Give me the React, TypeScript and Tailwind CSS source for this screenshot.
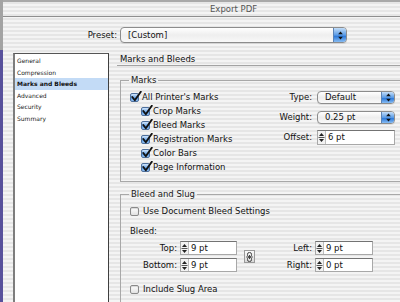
import React from "react";

function Check({ checked }: { checked: boolean }) {
  if (!checked) {
    return (
      <span className="relative inline-block w-[9px] h-[9px] shrink-0 rounded-[2px] border border-[#8a8a8a] bg-[linear-gradient(#ffffff,#e2e2e2)] shadow-[inset_0_1px_1px_rgba(0,0,0,0.15)]" />
    );
  }
  return (
    <span className="relative inline-block w-[9px] h-[9px] shrink-0 rounded-[2px] border border-[#4d6f9c] bg-[linear-gradient(#d3e6fb,#5c9de6_60%,#8fc0f3)]">
      <svg className="absolute left-[0px] top-[-3px]" width="11" height="11" viewBox="0 0 11 11">
        <path d="M1.3 6 L3.8 9.3 L9.8 0.8" fill="none" stroke="#111" strokeWidth="1.9" strokeLinecap="round" strokeLinejoin="round" />
      </svg>
    </span>
  );
}

function Arrows() {
  return (
    <svg width="5" height="9" viewBox="0 0 5 9">
      <path d="M2.5 0.5 L4.8 3.3 H0.2Z" fill="#111" />
      <path d="M2.5 8.5 L4.8 5.7 H0.2Z" fill="#111" />
    </svg>
  );
}

function Popup({ text, className }: { text: string; className: string }) {
  return (
    <div className={"flex rounded-[4px] border border-[#8c8c8c] overflow-hidden bg-[linear-gradient(#ffffff,#eeeeee_50%,#f8f8f8)] shadow-[0_1px_0_rgba(0,0,0,0.08)] " + className}>
      <div className="flex-1 pl-[7px] flex items-center text-[8.5px] leading-none text-[#111]">{text}</div>
      <div className="w-[13px] flex items-center justify-center border-l border-[#5b83b6] bg-[linear-gradient(#c3ddf8,#5a9be6_50%,#2f7ad9_60%,#88bdf3)]">
        <Arrows />
      </div>
    </div>
  );
}

function Stepper() {
  return (
    <div className="w-[8px] h-full flex items-center justify-center bg-[#f2f2f2] border-r border-[#bdbdbd]">
      <svg width="7" height="11" viewBox="0 0 7 11">
        <path d="M3.5 1 L6 4 H1Z" fill="#222" />
        <line x1="0.5" y1="5.5" x2="6.5" y2="5.5" stroke="#555" strokeWidth="1" />
        <path d="M3.5 10 L6 7 H1Z" fill="#222" />
      </svg>
    </div>
  );
}

function Field({ value, className }: { value: string; className: string }) {
  return (
    <div className={"flex border border-[#a8a8a8] border-t-[#737373] bg-white " + className}>
      <Stepper />
      <div className="flex-1 pl-[2px] flex items-center text-[8.5px] leading-none text-[#111]">{value}</div>
    </div>
  );
}

function Group({ title, className, children }: { title: string; className: string; children: React.ReactNode }) {
  return (
    <div className={className}>
      <div className="flex h-[10px]">
        <div className="w-[9px] h-[5px] self-end border-t border-l border-[#a8a8a8]" />
        <div className="px-[2px] text-[8.5px] leading-[10px] text-[#1a1a1a]">{title}</div>
        <div className="flex-1 h-[5px] self-end border-t border-r border-[#a8a8a8]" />
      </div>
      <div className="border-l border-r border-b border-[#a8a8a8]">{children}</div>
    </div>
  );
}

function CheckRow({ checked, label, className }: { checked: boolean; label: string; className: string }) {
  return (
    <div className={"h-[14px] flex items-center gap-[3px] " + className}>
      <Check checked={checked} />
      <span className="text-[8.5px] leading-none text-[#111] whitespace-nowrap">{label}</span>
    </div>
  );
}

function Chain() {
  return (
    <div className="w-[11px] h-[13px] border border-[#9a9a9a] bg-[linear-gradient(#fafafa,#d9d9d9)] flex items-center justify-center">
      <svg width="7" height="10" viewBox="0 0 7 10">
        <rect x="1.5" y="0.5" width="4" height="4.5" rx="1.8" fill="none" stroke="#444" strokeWidth="1" />
        <rect x="1.5" y="5" width="4" height="4.5" rx="1.8" fill="none" stroke="#444" strokeWidth="1" />
        <line x1="3.5" y1="3" x2="3.5" y2="7" stroke="#444" strokeWidth="1" />
        <line x1="0" y1="5" x2="1.5" y2="5" stroke="#666" strokeWidth="1" />
        <line x1="5.5" y1="5" x2="7" y2="5" stroke="#666" strokeWidth="1" />
      </svg>
    </div>
  );
}

export default function App() {
  const items = ["General", "Compression", "Marks and Bleeds", "Advanced", "Security", "Summary"];
  return (
    <div className="w-[400px] h-[302px] overflow-hidden flex [font-family:'DejaVu_Sans',sans-serif] text-[#1a1a1a] bg-[repeating-linear-gradient(180deg,#f4f4f4_0px,#f4f4f4_2px,#e6e6e6_2px,#e6e6e6_4px)]">
      <div className="w-[3px] h-full flex flex-col shrink-0">
        <div className="h-[50px] bg-[#a3a3a3]" />
        <div className="flex-1 bg-[#58519c]" />
      </div>
      <div className="flex-1 flex flex-col min-w-0">
        <div className="h-[17px] shrink-0 border-t-2 border-t-[#a9a9a9] border-b border-b-[#8f8f8f] flex items-center pl-[207px] text-[8.5px] leading-none text-[#555]">
          Export PDF
        </div>
        <div className="mt-[10px] h-[16px] flex items-center shrink-0">
          <span className="w-[114px] text-right text-[8.5px] leading-none text-[#111]">Preset:</span>
          <Popup text="[Custom]" className="ml-[3px] w-[227px] h-[16px]" />
        </div>
        <div className="mt-[10px] flex flex-1 min-h-0">
          <div className="ml-[10px] w-[96px] shrink-0 bg-white border-l-2 border-l-[#7d7d7d] border-t border-t-[#555] border-r border-r-[#3f3f3f] pt-[1px]">
            {items.map((it) => (
              <div
                key={it}
                className={
                  it === "Marks and Bleeds"
                    ? "h-[11.6px] leading-[11.6px] pl-[2px] text-[6px] font-bold text-[#111] bg-[#c3dbf6]"
                    : "h-[11.6px] leading-[11.6px] pl-[2px] text-[6px] text-[#222]"
                }
              >
                {it}
              </div>
            ))}
          </div>
          <div className="ml-[8px] w-[300px] shrink-0 flex flex-col">
            <div className="h-[13px] border-b border-[#a3a3a3] pl-[3px] text-[8.5px] leading-[12px] text-[#111]">Marks and Bleeds</div>
            <Group title="Marks" className="mt-[9px] ml-[3px] w-[292px]">
              <div className="flex">
                <div className="w-[150px] pl-[9px] pt-[5px] pb-[7px] flex flex-col">
                  <CheckRow checked label="All Printer's Marks" className="" />
                  <CheckRow checked label="Crop Marks" className="pl-[11px]" />
                  <CheckRow checked label="Bleed Marks" className="pl-[11px]" />
                  <CheckRow checked label="Registration Marks" className="pl-[11px]" />
                  <CheckRow checked label="Color Bars" className="pl-[11px]" />
                  <CheckRow checked label="Page Information" className="pl-[11px]" />
                </div>
                <div className="pt-[6px] flex flex-col">
                  <div className="flex items-center">
                    <span className="w-[41px] text-right text-[8.5px] leading-none text-[#111]">Type:</span>
                    <Popup text="Default" className="ml-[5px] w-[78px] h-[13px]" />
                  </div>
                  <div className="mt-[7px] flex items-center">
                    <span className="w-[41px] text-right text-[8.5px] leading-none text-[#111]">Weight:</span>
                    <Popup text="0.25 pt" className="ml-[5px] w-[78px] h-[13px]" />
                  </div>
                  <div className="mt-[6px] flex items-center">
                    <span className="w-[41px] text-right text-[8.5px] leading-none text-[#111]">Offset:</span>
                    <Field value="6 pt" className="ml-[5px] w-[78px] h-[15px]" />
                  </div>
                </div>
              </div>
            </Group>
            <Group title="Bleed and Slug" className="mt-[7px] ml-[3px] w-[292px]">
              <div className="pl-[9px] pt-[5px] pb-[10px] flex flex-col">
                <CheckRow checked={false} label="Use Document Bleed Settings" className="gap-[4px]" />
                <div className="mt-[7px] h-[12px] leading-[12px] text-[8.5px] text-[#111]">Bleed:</div>
                <div className="mt-[4px] flex items-center">
                  <div className="grid grid-cols-[47px_57px] gap-x-[3px] gap-y-[3px] items-center">
                    <span className="text-right text-[8.5px] leading-none text-[#111]">Top:</span>
                    <Field value="9 pt" className="h-[14px]" />
                    <span className="text-right text-[8.5px] leading-none text-[#111]">Bottom:</span>
                    <Field value="9 pt" className="h-[14px]" />
                  </div>
                  <div className="ml-[7px]">
                    <Chain />
                  </div>
                  <div className="grid grid-cols-[57px_58px] gap-x-[3px] gap-y-[3px] items-center">
                    <span className="text-right text-[8.5px] leading-none text-[#111]">Left:</span>
                    <Field value="9 pt" className="h-[14px]" />
                    <span className="text-right text-[8.5px] leading-none text-[#111]">Right:</span>
                    <Field value="0 pt" className="h-[14px]" />
                  </div>
                </div>
                <CheckRow checked={false} label="Include Slug Area" className="mt-[10px] gap-[4px]" />
              </div>
            </Group>
          </div>
        </div>
      </div>
    </div>
  );
}
